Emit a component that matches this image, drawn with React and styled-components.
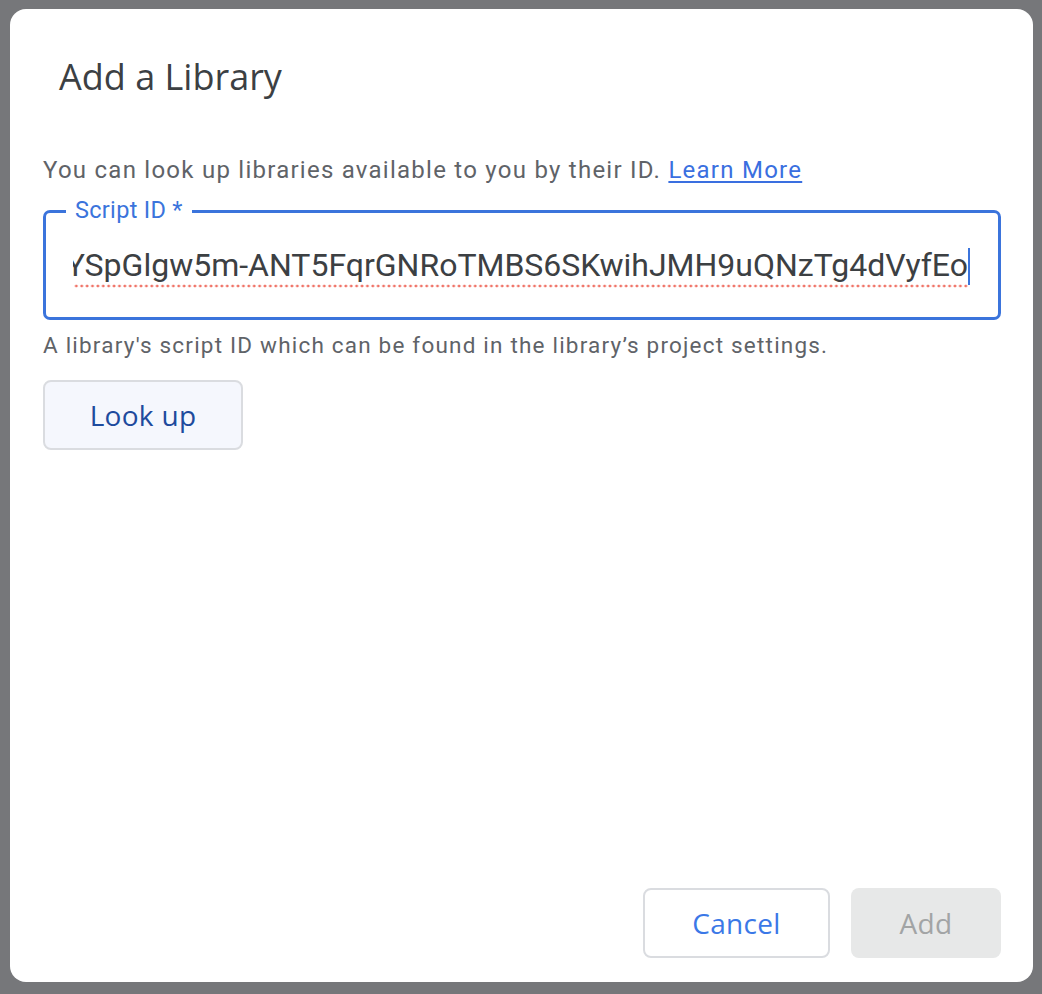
import React from "react";
import styled, { createGlobalStyle } from "styled-components";

const Global = createGlobalStyle`
  html, body { margin: 0; padding: 0; }
  body {
    background: #76777a;
    font-family: Roboto, "Noto Sans", Arial, sans-serif;
  }
`;

const Page = styled.div`
  height: 994px;
  box-sizing: border-box;
  padding: 9px 9px 12px 10px;
  display: flex;
`;

const Dialog = styled.div`
  flex: 1;
  min-width: 0;
  background: #ffffff;
  border-radius: 16px;
  padding: 46px 32px 24px 33px;
  display: flex;
  flex-direction: column;
  box-sizing: border-box;
`;

const Title = styled.h1`
  margin: 0 0 0 16px;
  font-family: "Open Sans", Roboto, sans-serif;
  font-weight: 400;
  font-size: 36px;
  line-height: 44px;
  color: #3c4043;
`;

const Description = styled.p`
  margin: 56px 0 0;
  font-size: 24px;
  letter-spacing: 1.25px;
  line-height: 30px;
  color: #5f6368;
`;

const Link = styled.a`
  color: #3a6fe0;
  text-decoration: underline;
  text-decoration-thickness: 2px;
  text-underline-offset: 3px;
  cursor: pointer;
`;

const Field = styled.div`
  position: relative;
  margin-top: 25px;
  height: 110px;
  box-sizing: border-box;
  border: 3px solid #3b74dc;
  border-radius: 7px;
  padding: 0 28px 0 27px;
  display: flex;
  align-items: center;
`;

const FieldLabel = styled.span`
  position: absolute;
  top: -17px;
  left: 20px;
  padding: 0 9px;
  background: #ffffff;
  color: #3b74dc;
  font-size: 23.5px;
  letter-spacing: 0.3px;
  line-height: 28px;
`;

const ValueClip = styled.div`
  flex: 1;
  min-width: 0;
  overflow: hidden;
  display: flex;
  justify-content: flex-end;
  align-items: center;
  margin-top: 4px;
`;

const Value = styled.span`
  flex: none;
  display: inline-block;
  white-space: nowrap;
  font-size: 32px;
  line-height: 36px;
  padding-bottom: 5px;
  color: #3c4043;
  background-image: radial-gradient(circle, #f07468 1.1px, transparent 1.7px);
  background-size: 5.4px 4px;
  background-repeat: repeat-x;
  background-position: right bottom;
`;

const Caret = styled.span`
  flex: none;
  width: 2px;
  height: 37px;
  background: #3b74dc;
  margin-top: 2px;
`;

const Helper = styled.p`
  margin: 12px 0 0;
  font-size: 22.5px;
  letter-spacing: 1.2px;
  line-height: 26px;
  color: #5f6368;
`;

const Button = styled.button`
  box-sizing: border-box;
  height: 70px;
  width: ${(p) => p.$w}px;
  border-radius: 8px;
  border: 2px solid ${(p) => (p.$disabled ? "transparent" : "#dadce0")};
  background: ${(p) => p.$bg};
  color: ${(p) => p.$color};
  font-family: "Open Sans", Roboto, sans-serif;
  font-weight: 500;
  font-size: 28px;
  letter-spacing: 0.3px;
  padding: 0;
  cursor: ${(p) => (p.$disabled ? "default" : "pointer")};
`;

const LookupRow = styled.div`
  margin-top: 22px;
  display: flex;
`;

const Footer = styled.div`
  margin-top: auto;
  display: flex;
  justify-content: flex-end;
  gap: 21px;
`;

export default function App() {
  return (
    <>
      <Global />
      <Page>
        <Dialog>
          <Title>Add a Library</Title>
          <Description>
            You can look up libraries available to you by their ID.{" "}
            <Link>Learn More</Link>
          </Description>
          <Field>
            <FieldLabel>Script ID *</FieldLabel>
            <ValueClip>
              <Value>1qS4bN7ZYSpGlgw5m-ANT5FqrGNRoTMBS6SKwihJMH9uQNzTg4dVyfEo</Value>
            </ValueClip>
            <Caret />
          </Field>
          <Helper>
            A library's script ID which can be found in the library’s project settings.
          </Helper>
          <LookupRow>
            <Button $w={200} $bg="#f5f7fd" $color="#1e4b9d">
              Look up
            </Button>
          </LookupRow>
          <Footer>
            <Button $w={187} $bg="#ffffff" $color="#3b78e7">
              Cancel
            </Button>
            <Button $w={150} $bg="#e7e8e8" $color="#a2a4a5" $disabled>
              Add
            </Button>
          </Footer>
        </Dialog>
      </Page>
    </>
  );
}
